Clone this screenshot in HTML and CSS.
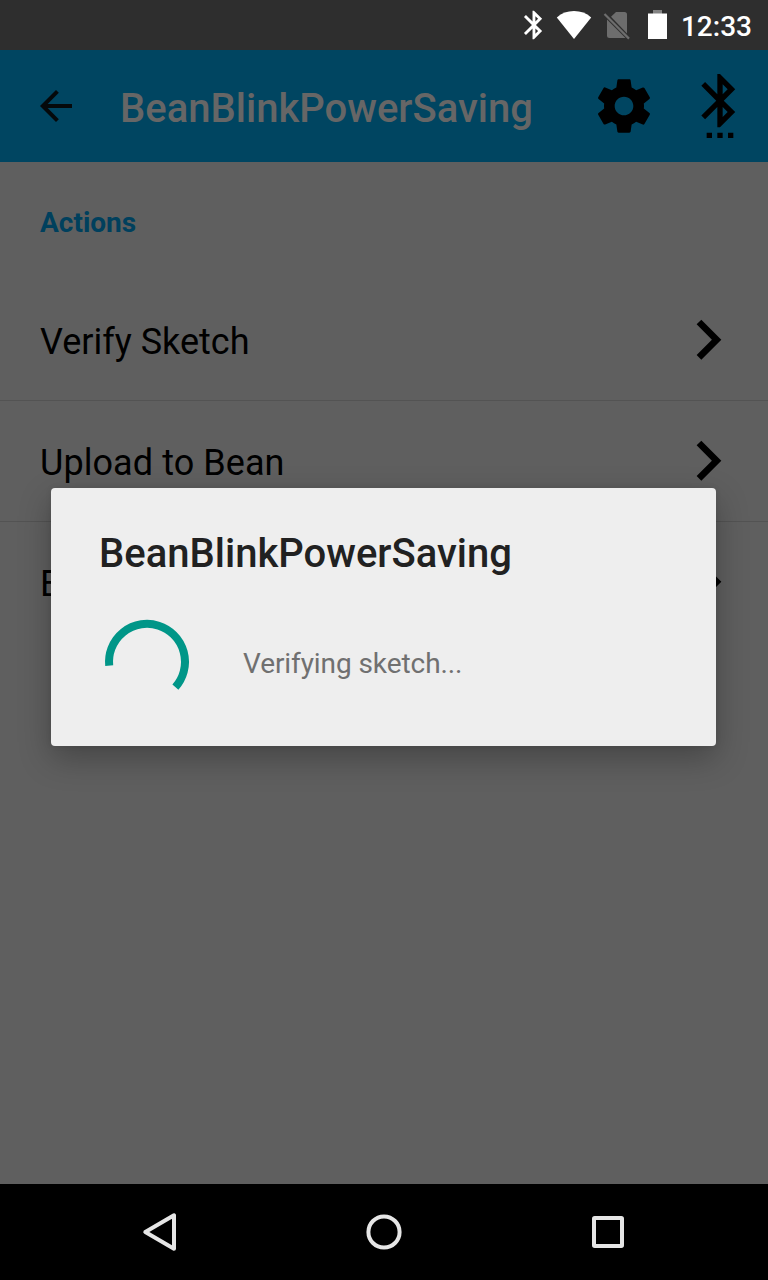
FILE: index.html
```html
<!DOCTYPE html>
<html lang="en">
<head>
<meta charset="utf-8">
<title>BeanBlinkPowerSaving</title>
<link rel="stylesheet" href="styles.css">
</head>
<body>
<div class="screen">
  <div class="status-bar">
    <svg class="status-icons" width="146" height="50" viewBox="522 0 146 50">
      <path fill="#fff" transform="translate(516.8 7.8) scale(1.43)" d="M17.71 7.71L12 2h-1v7.59L6.41 5 5 6.41 10.59 12 5 17.59 6.41 19 11 14.41V22h1l5.71-5.71-4.3-4.29 4.3-4.29zM13 5.83l1.88 1.88L13 9.59V5.83zm1.88 10.46L13 18.17v-3.76l1.88 1.88z"/>
      <path fill="#fff" d="M574 39L556.8 17.4Q564 11 574 11T591.2 17.4Z"/>
      <path fill="#6d6d6d" d="M616 12H624.5Q627 12 627 14.5V33.5L611 16.8Z"/>
      <path fill="#6d6d6d" d="M607 19.5L625.5 38H609.5Q607 38 607 35.5Z"/>
      <path stroke="#6d6d6d" stroke-width="2.2" d="M604.5 14L629 38.6"/>
      <path fill="#838383" d="M653 10h9v4h-9z"/>
      <path fill="#fff" d="M648 13.5h19V39h-19z"/>
    </svg>
    <span class="clock">12:33</span>
  </div>
  <header class="toolbar">
    <svg class="back" width="48" height="48" viewBox="0 0 24 24"><path d="M20 11H7.83l5.59-5.59L12 4l-8 8 8 8 1.41-1.41L7.83 13H20v-2z"/></svg>
    <h1 class="title">BeanBlinkPowerSaving</h1>
    <svg class="action" width="64" height="64" viewBox="0 0 24 24"><path d="M19.43 12.98c.04-.32.07-.64.07-.98s-.03-.66-.07-.98l2.11-1.65c.19-.15.24-.42.12-.64l-2-3.46c-.12-.22-.39-.3-.61-.22l-2.49 1c-.52-.4-1.08-.73-1.69-.98l-.38-2.65C14.46 2.18 14.25 2 14 2h-4c-.25 0-.46.18-.49.42l-.38 2.65c-.61.25-1.17.59-1.69.98l-2.49-1c-.23-.09-.49 0-.61.22l-2 3.46c-.13.22-.07.49.12.64l2.11 1.65c-.04.32-.07.65-.07.98s.03.66.07.98l-2.11 1.65c-.19.15-.24.42-.12.64l2 3.46c.12.22.39.3.61.22l2.49-1c.52.4 1.08.73 1.69.98l.38 2.65c.03.24.24.42.49.42h4c.25 0 .46-.18.49-.42l.38-2.65c.61-.25 1.17-.59 1.69-.98l2.49 1c.23.09.49 0 .61-.22l2-3.46c.12-.22.07-.49-.12-.64l-2.11-1.65zM12 15.5c-1.93 0-3.5-1.57-3.5-3.5s1.57-3.5 3.5-3.5 3.5 1.57 3.5 3.5-1.57 3.5-3.5 3.5z"/></svg>
    <svg class="action" width="64" height="64" viewBox="0 0 24 24"><path d="M11 24h2v-2h-2v2zm-4 0h2v-2H7v2zm8 0h2v-2h-2v2zm2.71-18.29L12 0h-1v7.59L6.41 3 5 4.41 10.59 10 5 15.59 6.41 17 11 12.41V20h1l5.71-5.71-4.3-4.29 4.3-4.29zM13 3.83l1.88 1.88L13 7.59V3.83zm1.88 10.46L13 16.17v-3.76l1.88 1.88z"/></svg>
  </header>
  <main class="content">
    <h2 class="section">Actions</h2>
    <div class="row"><span>Verify Sketch</span><svg width="80" height="80" viewBox="0 .1 24 24"><path d="M10 6L8.59 7.41 13.17 12l-4.58 4.59L10 18l6-6z"/></svg></div>
    <div class="row upload"><span>Upload to Bean</span><svg width="80" height="80" viewBox="0 .1 24 24"><path d="M10 6L8.59 7.41 13.17 12l-4.58 4.59L10 18l6-6z"/></svg></div>
    <div class="row last"><span>E</span><svg width="80" height="80" viewBox="0 .1 24 24"><path d="M10 6L8.59 7.41 13.17 12l-4.58 4.59L10 18l6-6z"/></svg></div>
  </main>
  <nav class="nav-bar">
    <svg width="48" height="48" viewBox="136 1208 48 48"><path d="M174 1215.3V1248.7L145.3 1232Z"/></svg>
    <svg width="48" height="48" viewBox="360 1208 48 48"><circle cx="384" cy="1232" r="15.6"/></svg>
    <svg width="48" height="48" viewBox="584 1208 48 48"><rect x="594" y="1218" width="28" height="28" rx=".7"/></svg>
  </nav>
  <div class="dialog">
    <h2 class="dialog-title">BeanBlinkPowerSaving</h2>
    <div class="progress">
      <svg width="96" height="96" viewBox="0 0 96 96"><path d="M10.2 51.7A38 38 0 1 1 76.4 73.1"/></svg>
      <span>Verifying sketch...</span>
    </div>
  </div>
</div>
</body>
</html>
```
FILE: styles.css
```css
* { box-sizing: border-box; }
body { margin: 0; font-family: Roboto, sans-serif; }
h1, h2 { margin: 0; white-space: nowrap; }
svg { display: block; flex: none; }
.screen {
  position: relative;
  display: flex;
  flex-direction: column;
  width: 768px;
  height: 1280px;
  overflow: hidden;
  background: #5f5f5f;
}
.status-bar {
  display: flex;
  align-items: center;
  justify-content: flex-end;
  gap: 13px;
  height: 50px;
  padding-right: 16px;
  background: #2e2e2e;
}
.clock { padding-top: 4px; color: #fff; font-size: 28px; font-weight: 500; line-height: 32px; }
.toolbar {
  display: flex;
  align-items: center;
  height: 112px;
  padding: 0 16px 0 32px;
  background: #004561;
}
.title { flex: 1; padding: 6px 0 0 40px; color: #666; font-size: 40px; font-weight: 500; line-height: 48px; }
.back { fill: #05090b; }
.action + .action { margin-left: 32px; }
.content { flex: 1; }
.section {
  height: 118px;
  padding: 44px 40px 0;
  color: #00405d;
  font-size: 28px;
  font-weight: 700;
  line-height: 33px;
}
.row {
  display: flex;
  align-items: center;
  justify-content: space-between;
  height: 121px;
  padding: 0 20px 0 40px;
  border-bottom: 1px solid #535353;
  font-size: 36px;
  line-height: 42px;
}
.row span { padding-top: 4px; }
.upload { letter-spacing: .07px; }
.last { border-color: transparent; }
.nav-bar {
  display: flex;
  align-items: center;
  justify-content: center;
  gap: 176px;
  height: 96px;
  background: #000;
}
.nav-bar svg { fill: none; stroke: #e6e6e6; stroke-width: 4; stroke-linejoin: round; }
.dialog {
  position: absolute;
  top: 488px;
  left: 51px;
  width: 665px;
  height: 258px;
  padding: 42px 48px 0;
  border-radius: 4px;
  background: #eee;
  box-shadow: 0 12px 32px rgba(0, 0, 0, .28), 0 0 6px rgba(0, 0, 0, .08);
}
.dialog-title { color: #212121; font-size: 40px; font-weight: 500; line-height: 48px; }
.progress {
  display: flex;
  align-items: center;
  gap: 48px;
  padding-top: 36px;
  color: #707070;
  font-size: 28px;
  line-height: 33px;
}
.progress span { padding-top: 3px; letter-spacing: -.08px; }
.progress path { fill: none; stroke: #009688; stroke-width: 8; }
```
